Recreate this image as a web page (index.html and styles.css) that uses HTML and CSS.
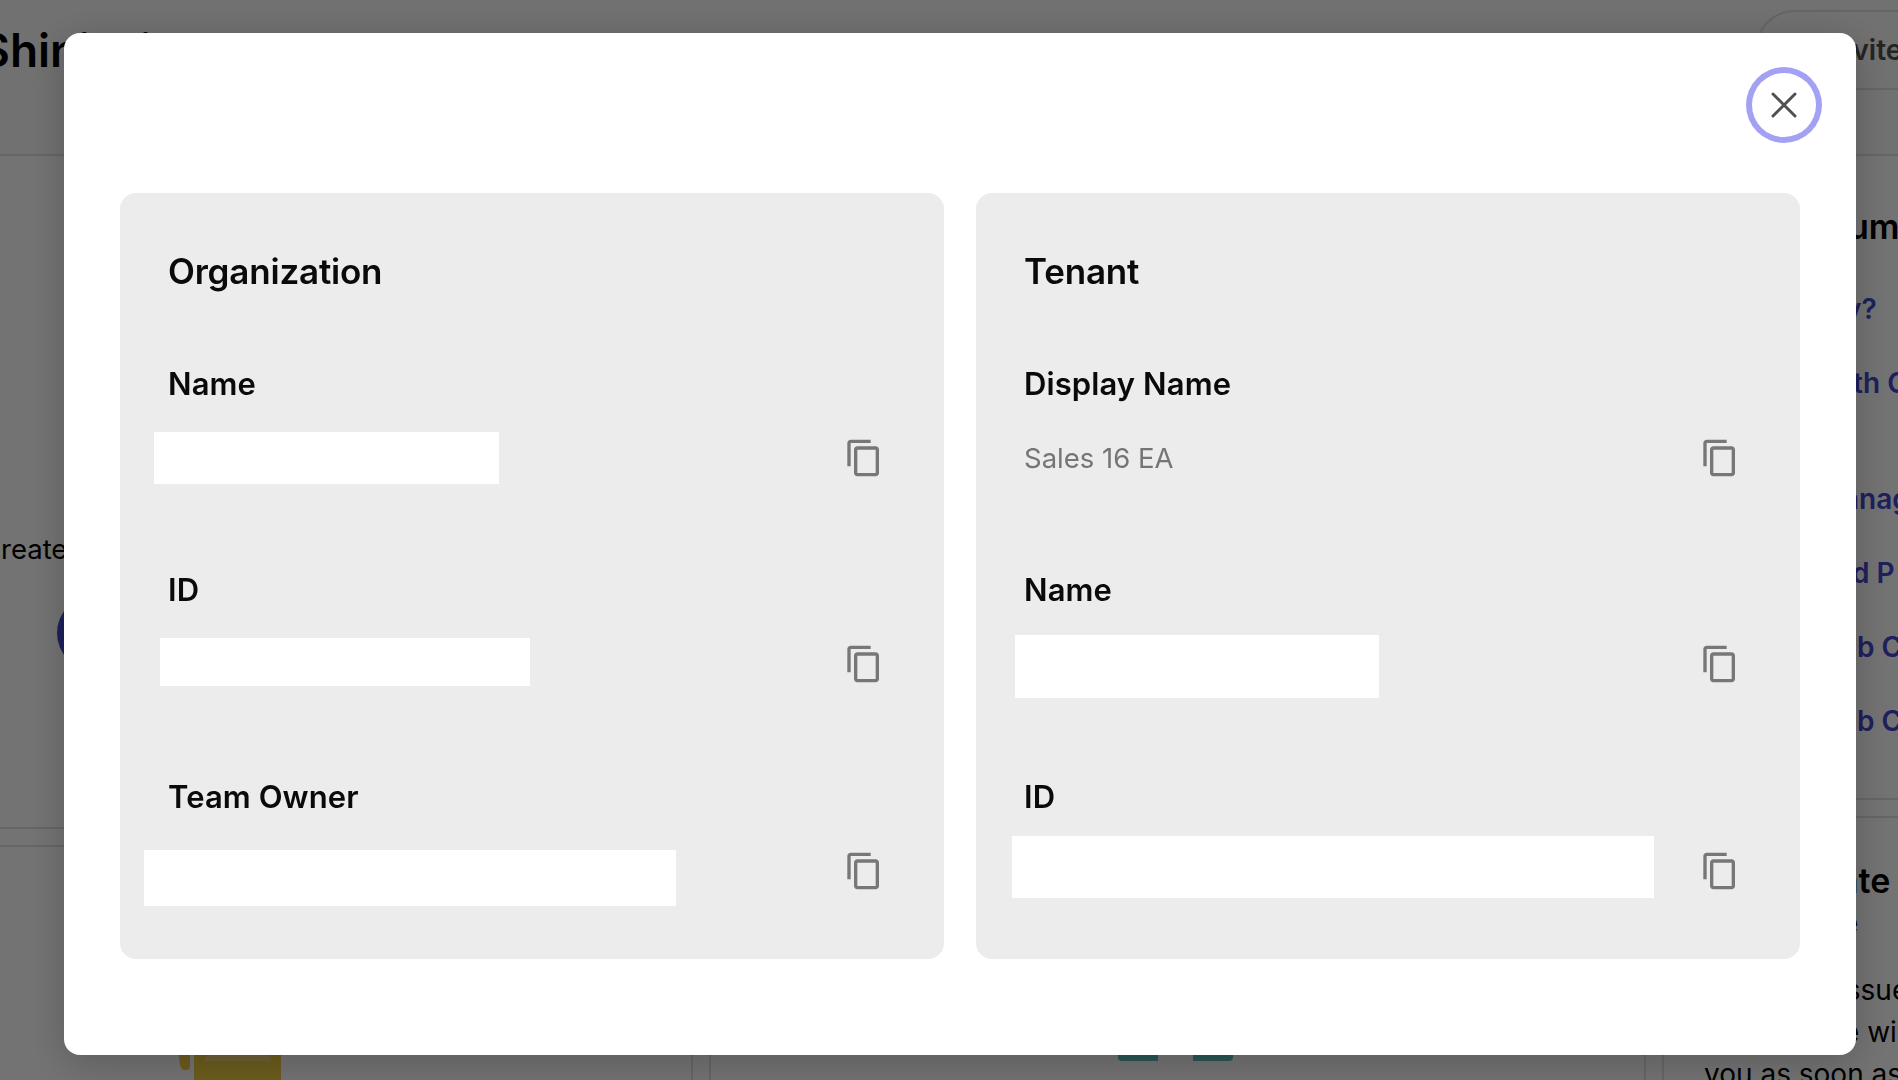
FILE: index.html
```html
<!DOCTYPE html>
<html lang="en">
<head>
<meta charset="utf-8">
<title>Organization and tenant details</title>
<link rel="stylesheet" href="styles.css">
</head>
<body>
<svg width="0" height="0" class="sprite" aria-hidden="true">
  <symbol id="copy" viewBox="0 0 24 24"><path d="M16 1H4c-1.100 0-2 .9-2 2v14h2V3h12V1zm3 4H8c-1.100 0-2 .9-2 2v14c0 1.100.9 2 2 2h11c1.100 0 2-.9 2-2V7c0-1.100-.9-2-2-2zm0 16H8V7h11v14z"/></symbol>
</svg>

<div class="page">
  <header class="topbar">
    <h1 class="topbar-title">Shini Ai</h1>
    <div class="pill">Invite</div>
  </header>
  <div class="columns">
    <main class="content">
      <section class="card hero">
        <p class="hero-text">reate</p>
        <div class="hero-button"></div>
      </section>
      <div class="tiles">
        <section class="card tile tile-first">
          <svg class="art" width="110" height="40" viewBox="0 0 110 40"><path class="gold" d="M4 0H17V26Q17 30 13 30H12Q8 30 7 25Z"/><rect class="gold" x="21" y="0" width="87" height="46" rx="3"/><path class="gold-light" d="M42 0H88L98 21H31Z"/></svg>
        </section>
        <section class="card tile">
          <svg class="art" width="120" height="40" viewBox="0 0 120 40"><path class="teal" d="M1 0H41V21H5Q1 21 1 17Z"/><path class="teal" d="M76 0H116V17Q116 21 112 21H76Z"/></svg>
        </section>
      </div>
    </main>
    <aside class="side">
      <section class="card links">
        <h2 class="side-title forum">um</h2>
        <a class="link l1">y?</a>
        <a class="link l2">th C</a>
        <a class="link l3 spaced">anag</a>
        <a class="link l4">d P</a>
        <a class="link l5">b C</a>
        <a class="link l5">b C</a>
      </section>
      <section class="card notes">
        <h2 class="side-title update">ate</h2>
        <p class="note n1">e</p>
        <p class="note n2">issue</p>
        <p class="note n3">e wi</p>
        <p class="note">you as soon as</p>
      </section>
    </aside>
  </div>
</div>

<div class="backdrop">
  <div class="dialog" role="dialog">
    <div class="dialog-head">
      <button class="close" aria-label="Close"><svg width="28" height="28" viewBox="0 0 28 28"><path d="M3 3L25 25M25 3L3 25"/></svg></button>
    </div>
    <div class="panels">
      <section class="panel">
        <h2 class="panel-title">Organization</h2>
        <div class="field">
          <h3 class="label">Name</h3>
          <div class="row"><span class="mask org-name"></span><svg class="icon"><use href="#copy"/></svg></div>
        </div>
        <div class="field">
          <h3 class="label">ID</h3>
          <div class="row"><span class="mask org-id"></span><svg class="icon"><use href="#copy"/></svg></div>
        </div>
        <div class="field">
          <h3 class="label">Team Owner</h3>
          <div class="row"><span class="mask org-owner"></span><svg class="icon"><use href="#copy"/></svg></div>
        </div>
      </section>
      <section class="panel">
        <h2 class="panel-title">Tenant</h2>
        <div class="field">
          <h3 class="label">Display Name</h3>
          <div class="row"><span class="value">Sales 16 EA</span><svg class="icon"><use href="#copy"/></svg></div>
        </div>
        <div class="field">
          <h3 class="label">Name</h3>
          <div class="row"><span class="mask tenant-name"></span><svg class="icon"><use href="#copy"/></svg></div>
        </div>
        <div class="field">
          <h3 class="label">ID</h3>
          <div class="row"><span class="mask tenant-id"></span><svg class="icon"><use href="#copy"/></svg></div>
        </div>
      </section>
    </div>
  </div>
</div>
</body>
</html>
```
FILE: styles.css
```css
* { box-sizing: border-box; margin: 0; padding: 0; }
body { font-family: Inter, "Liberation Sans", sans-serif; width: 1898px; height: 1080px; overflow: hidden; background: #fff; color: #0a0a0a; }
.sprite { position: absolute; }

/* Page behind the dialog */
.page { width: 1898px; height: 1080px; overflow: hidden; display: flex; flex-direction: column; }
.topbar { height: 156px; flex: none; border-bottom: 2px solid #e2e2e2; background: #fafafa; display: flex; justify-content: space-between; align-items: flex-start; padding-top: 10px; }
.topbar-title { font-size: 46px; line-height: 56px; font-weight: 600; margin: 12px 0 0 -20px; white-space: nowrap; word-spacing: 4px; color: #000; }
.pill { width: 260px; margin-right: -117px; height: 80px; border: 2px solid #e0e0e0; border-radius: 40px; font-size: 28px; font-weight: 600; line-height: 76px; padding-left: 71px; color: #505050; }
.columns { flex: 1; min-height: 0; display: flex; gap: 16px; }
.content { width: 1646px; flex: none; display: flex; flex-direction: column; gap: 16px; }
.card { border: 2px solid #e2e2e2; background: #fff; overflow: hidden; }
.hero { height: 673px; flex: none; border-top: 0; border-left: 0; }
.hero-text { padding: 373px 0 0 1px; font-size: 27.5px; line-height: 40px; color: #000; }
.hero-button { width: 240px; height: 76px; border-radius: 38px; margin: 26px 0 0 57px; background: #4646cf; }
.tiles { flex: 1; display: flex; gap: 16px; }
.tile { flex: 1; border-bottom: 0; padding: 193px 0 0 406px; }
.tile-first { flex: none; width: 693px; padding-left: 173px; border-left: 0; }
.art { display: block; }
.gold { fill: #efcc40; }
.gold-light { fill: #efd67c; }
.teal { fill: #60bfba; }
.side { flex: 1; min-width: 0; display: flex; flex-direction: column; gap: 16px; }
.links { height: 644px; flex: none; border-top: 0; border-right: 0; padding-top: 49px; white-space: nowrap; }
.side-title { font-size: 34px; line-height: 44px; font-weight: 600; color: #000; white-space: nowrap; }
.forum { padding: 0 0 40px 184px; }
.link { display: block; font-size: 28px; font-weight: 600; line-height: 40px; margin-bottom: 34px; color: #4646cf; }
.spaced { margin-top: 76px; }
.l1 { padding-left: 181px; }
.l2 { padding-left: 189px; }
.l3 { padding-left: 179px; }
.l4 { padding-left: 188px; }
.l5 { padding-left: 193px; }
.notes { flex: 1; border-right: 0; border-bottom: 0; padding: 41px 0 0 40px; white-space: nowrap; }
.update { padding-left: 135px; margin-bottom: -1px; }
.note { font-size: 28px; line-height: 42px; color: #000; }
.n1 { padding-left: 138px; margin-bottom: 25px; }
.n2 { padding-left: 135px; }
.n3 { padding-left: 139px; }

/* Dialog */
.backdrop { position: fixed; inset: 0; padding: 33px 42px 25px 64px; background: rgba(0, 0, 0, .55); }
.dialog { height: 1022px; background: #fff; border-radius: 16px; box-shadow: 0 8px 40px rgba(0, 0, 0, .22); padding: 40px 56px 96px; }
.dialog-head { height: 120px; display: flex; justify-content: flex-end; align-items: flex-start; }
.close { width: 64px; height: 64px; margin-right: -16px; border: 0; border-radius: 50%; background: #fff; box-shadow: 0 0 0 6px #a4a1f5; display: flex; align-items: center; justify-content: center; }
.close path { stroke: #505050; stroke-width: 3; stroke-linecap: round; }
.panels { display: flex; gap: 32px; }
.panel { flex: 1; height: 766px; border-radius: 16px; background: #ececec; padding: 56px 60px 0 48px; }
.panel-title { font-size: 35px; font-weight: 600; line-height: 44px; margin-bottom: 71px; letter-spacing: -.2px; }
.field { margin-bottom: 92.3px; }
.label { font-size: 31px; font-weight: 600; line-height: 40px; margin-bottom: 34px; letter-spacing: .1px; }
.row { position: relative; height: 40px; display: flex; align-items: center; justify-content: flex-end; }
.value { margin-right: auto; font-size: 27.5px; line-height: 40px; color: #757575; }
.icon { width: 40px; height: 40px; fill: #777; }

/* White blocks laid over private values */
.mask { position: absolute; background: #fff; }
.org-name { left: -14px; top: -6px; width: 345px; height: 52px; }
.org-id { left: -8px; top: -6.500px; width: 370px; height: 48px; }
.org-owner { left: -24px; top: -1px; width: 532px; height: 56px; }
.tenant-name { left: -9px; top: -9.500px; width: 364px; height: 63px; }
.tenant-id { left: -12px; top: -15px; width: 642px; height: 62px; }
```
